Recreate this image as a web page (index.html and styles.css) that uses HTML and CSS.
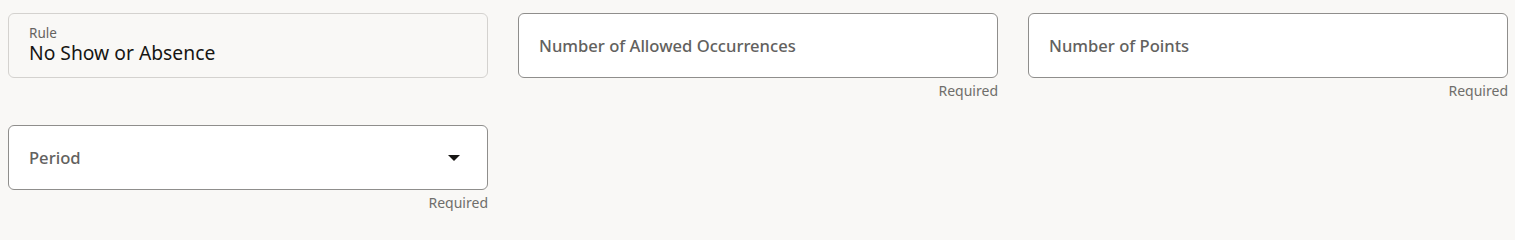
FILE: index.html
```html
<!DOCTYPE html>
<html lang="en">
<head>
<meta charset="utf-8">
<title>Rule form</title>
<link rel="stylesheet" href="styles.css">
</head>
<body>
<div class="form">
  <div class="cell">
    <div class="field readonly">
      <span class="small-label">Rule</span>
      <span class="value">No Show or Absence</span>
    </div>
  </div>
  <div class="cell">
    <div class="field">
      <span class="placeholder-label">Number of Allowed Occurrences</span>
    </div>
    <div class="helper">Required</div>
  </div>
  <div class="cell">
    <div class="field">
      <span class="placeholder-label">Number of Points</span>
    </div>
    <div class="helper">Required</div>
  </div>
  <div class="cell">
    <div class="field select">
      <span class="placeholder-label">Period</span>
      <svg class="caret" width="12" height="6" viewBox="0 0 12 6" aria-hidden="true"><path d="M0 0 H12 L6 6 Z" fill="#161513"/></svg>
    </div>
    <div class="helper">Required</div>
  </div>
</div>
</body>
</html>
```
FILE: styles.css
```css
html, body {
  margin: 0;
  padding: 0;
  background: #f9f8f6;
}
body {
  font-family: "Noto Sans", "Open Sans", sans-serif;
  color: #161513;
}
.form {
  display: grid;
  grid-template-columns: repeat(3, 480px);
  column-gap: 30px;
  row-gap: 26px;
  padding: 13px 0 0 8px;
  align-items: start;
}
.cell {
  display: flex;
  flex-direction: column;
}
.field {
  box-sizing: border-box;
  height: 65px;
  border: 1px solid #8f8e8c;
  border-radius: 6px;
  background: #ffffff;
  padding: 0 20px;
  display: flex;
  align-items: center;
}
.field.readonly {
  background: #f9f8f6;
  border-color: #d4d2cf;
  flex-direction: column;
  align-items: flex-start;
  justify-content: center;
  padding-bottom: 1px;
}
.small-label {
  font-size: 13.5px;
  line-height: 16px;
  color: #65635f;
}
.value {
  font-size: 19.3px;
  line-height: 24px;
  color: #161513;
}
.placeholder-label {
  font-size: 16.6px;
  font-weight: 500;
  color: #62615e;
  margin-top: -1px;
}
.select {
  justify-content: space-between;
  padding-right: 27px;
}
.caret {
  display: block;
  margin-top: 0;
}
.helper {
  margin-top: 4px;
  text-align: right;
  font-size: 14px;
  line-height: 17px;
  color: #6f6e6b;
}
```
